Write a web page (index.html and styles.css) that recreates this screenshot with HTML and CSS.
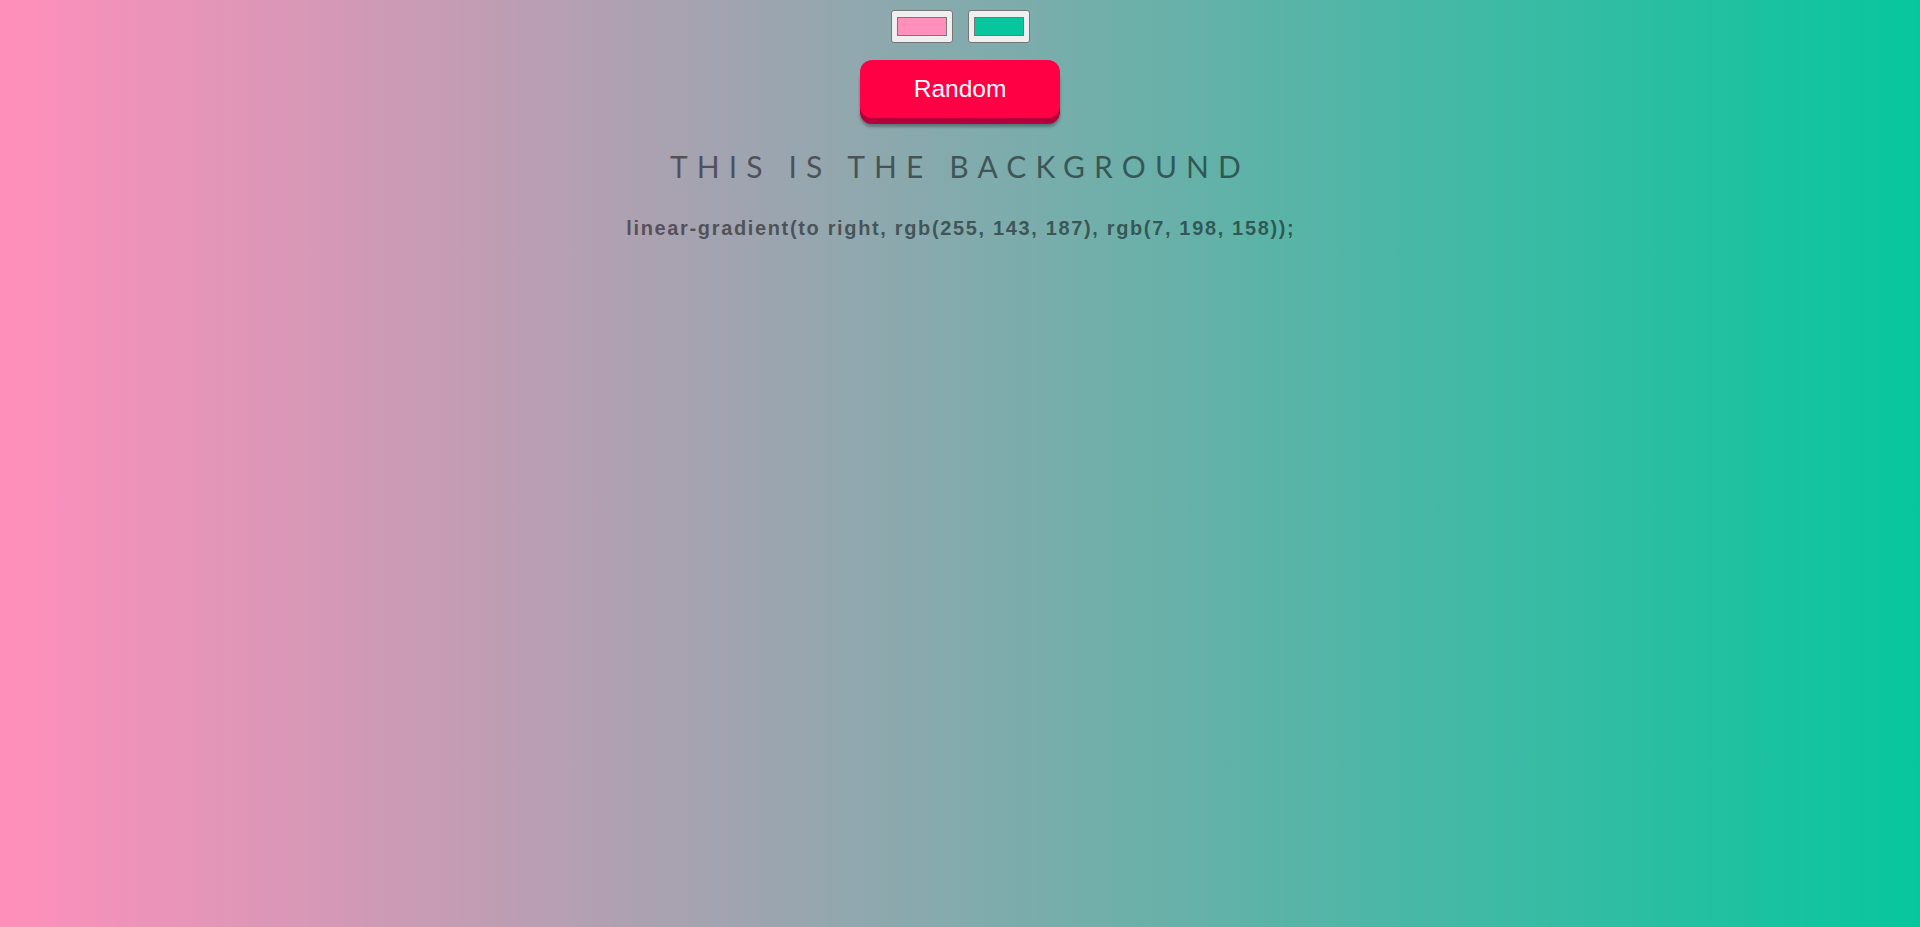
FILE: index.html
```html
<!DOCTYPE html>
<html lang="en">
<head>
<meta charset="utf-8">
<title>Gradient Background Generator</title>
<link rel="stylesheet" href="styles.css">
</head>
<body>
<main class="page">
  <div class="pickers">
    <input class="picker" type="color" value="#ff8fbb" aria-label="Color 1">
    <input class="picker" type="color" value="#07c69e" aria-label="Color 2">
  </div>
  <button class="random-btn" type="button">Random</button>
  <h3 class="title">THIS IS THE BACKGROUND</h3>
  <p class="css-code">linear-gradient(to right, rgb(255, 143, 187), rgb(7, 198, 158));</p>
</main>
</body>
</html>
```
FILE: styles.css
```css
html {
  min-height: 100%;
  background: linear-gradient(to right, rgb(255, 143, 187), rgb(7, 198, 158));
}

body {
  margin: 0;
  min-height: 100%;
  font-family: "Liberation Sans", Arial, sans-serif;
}

.page {
  display: flex;
  flex-direction: column;
  align-items: center;
  padding-top: 10px;
}

.pickers {
  display: flex;
  gap: 15px;
}

.picker {
  -webkit-appearance: none;
  appearance: none;
  box-sizing: border-box;
  width: 62px;
  height: 33px;
  padding: 0;
  margin: 0;
  border: 1px solid #767676;
  border-radius: 3px;
  background: #efefef;
  cursor: pointer;
}

.picker::-webkit-color-swatch-wrapper {
  padding: 6px 5px;
}

.picker::-webkit-color-swatch {
  border: 1px solid #777;
  border-radius: 0;
}

.random-btn {
  margin-top: 17px;
  width: 200px;
  height: 58px;
  border: none;
  border-radius: 12px;
  background: #ff0044;
  color: #fff;
  font-family: "Liberation Sans", Arial, sans-serif;
  font-size: 24.5px;
  box-shadow: 0 6px 0 #b3003c, 0 9px 3px rgba(0, 0, 0, 0.3);
  cursor: pointer;
}

.title {
  margin: 30px 0 0;
  font-family: Lato, "Open Sans", sans-serif;
  font-weight: 400;
  font-size: 30px;
  line-height: 36px;
  letter-spacing: 9.1px;
  color: rgba(0, 0, 0, 0.52);
}

.css-code {
  margin: 32px 0 0;
  font-family: "Liberation Sans", Arial, sans-serif;
  font-weight: 700;
  font-size: 20px;
  line-height: 24px;
  letter-spacing: 1.65px;
  padding-left: 1.65px;
  color: rgba(0, 0, 0, 0.52);
}
```
